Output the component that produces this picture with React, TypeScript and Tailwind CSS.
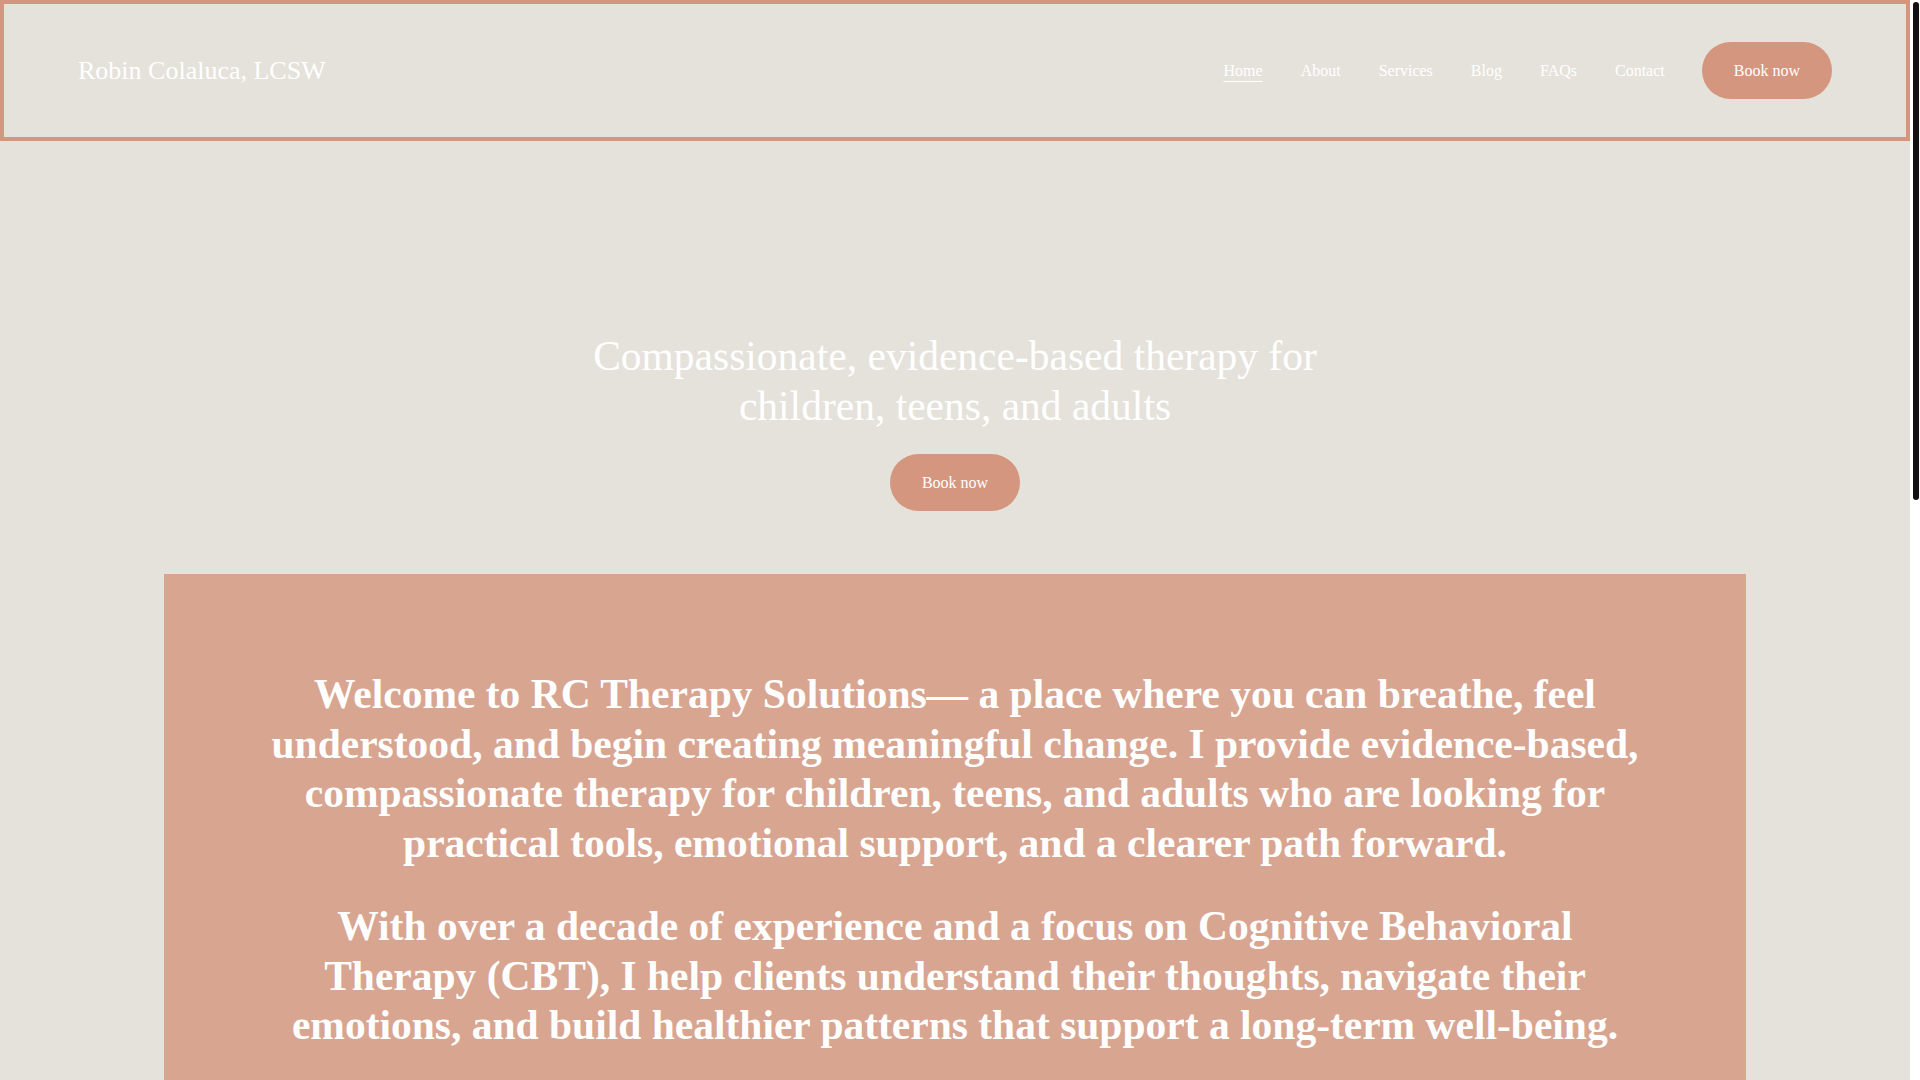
export default function App() {
  const links = ["Home", "About", "Services", "Blog", "FAQs", "Contact"];

  return (
    <div className="min-h-screen bg-white font-['Liberation_Serif',serif] text-white">
      <main className="min-h-screen w-[1910px] bg-[#e5e2db]">
        {/* header */}
        <header className="flex h-[141px] items-center justify-between border-4 border-[#d4967e] px-[74px]">
          <a href="#" className="text-[26px] leading-none">
            Robin Colaluca, LCSW
          </a>
          <nav className="flex items-center gap-[38px] text-[16px]">
            {links.map((l) => (
              <a
                key={l}
                href="#"
                className={l === "Home" ? "underline decoration-1 underline-offset-[5px]" : ""}
              >
                {l}
              </a>
            ))}
            <button className="ml-[-1px] h-[57px] rounded-full bg-[#d4967e] px-[32px] text-[16px]">
              Book now
            </button>
          </nav>
        </header>

        {/* hero */}
        <section className="flex flex-col items-center pt-[191px]">
          <h1 className="max-w-[800px] text-center text-[41.5px] font-normal leading-[49.5px]">
            Compassionate, evidence-based therapy for children, teens, and adults
          </h1>
          <button className="mt-[23px] h-[57px] rounded-full bg-[#d4967e] px-[32px] text-[16px]">
            Book now
          </button>
        </section>

        {/* intro panel */}
        <section className="mx-auto mt-[63px] w-[1582px] bg-[#d8a591] px-[100px] pb-[96px] pt-[96px]">
          <p className="text-center text-[41.5px] font-bold leading-[49.5px]">
            Welcome to RC Therapy Solutions— a place where you can breathe, feel understood, and begin
            creating meaningful change. I provide evidence-based, compassionate therapy for children,
            teens, and adults who are looking for practical tools, emotional support, and a clearer
            path forward.
          </p>
          <p className="mt-[34px] text-center text-[41.5px] font-bold leading-[49.5px]">
            With over a decade of experience and a focus on Cognitive Behavioral Therapy (CBT), I help
            clients understand their thoughts, navigate their emotions, and build healthier patterns
            that support a long-term well-being.
          </p>
        </section>
      </main>

      {/* scrollbar thumb */}
      <div className="fixed right-[1px] top-[2px] h-[498px] w-[6px] rounded-full bg-[#111111]" />
    </div>
  );
}
